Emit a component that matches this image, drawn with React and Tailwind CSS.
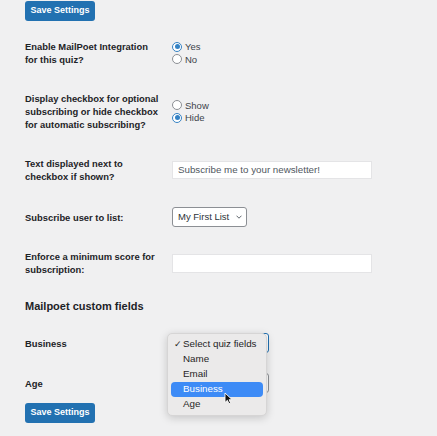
const font = { fontFamily: '"Liberation Sans", Arial, sans-serif' };

function Radio({ checked, label }) {
  return (
    <div className="flex items-center h-[12.5px]">
      <span
        className={
          "w-[10px] h-[10px] rounded-full border bg-white flex items-center justify-center shrink-0 " +
          (checked ? "border-[#3582c4]" : "border-[#8c8f94]")
        }
      >
        {checked && <span className="w-[5px] h-[5px] rounded-full bg-[#3582c4]" />}
      </span>
      <span className="ml-[3px] text-[9.5px] text-[#3c434a] leading-none">{label}</span>
    </div>
  );
}

function Row({ className = "", label, children }) {
  return (
    <div className={"flex items-center " + className}>
      <div className="w-[147px] shrink-0 text-[9.4px] leading-[13px] font-bold text-[#1d2327]">{label}</div>
      <div className="flex-1 relative">{children}</div>
    </div>
  );
}

function SaveButton({ className = "" }) {
  return (
    <button className={"w-[70px] h-[20px] rounded-[3px] bg-[#2271b1] text-white text-[9px] font-semibold flex items-center justify-center " + className}>
      Save Settings
    </button>
  );
}

function Chevron() {
  return (
    <svg width="6" height="4" viewBox="0 0 6 4" className="ml-auto">
      <polyline points="0.5,0.7 3,3.2 5.5,0.7" fill="none" stroke="#50575e" strokeWidth="0.9" />
    </svg>
  );
}

export default function App() {
  const options = ["Select quiz fields", "Name", "Email", "Business", "Age"];
  return (
    <div className="w-[437px] h-[436px] bg-[#f0f0f1] px-[25px] pt-[1px] overflow-hidden" style={font}>
      <SaveButton />

      <Row className="mt-[19px]" label={<>Enable MailPoet Integration<br />for this quiz?</>}>
        <Radio checked label="Yes" />
        <Radio label="No" />
      </Row>

      <Row className="mt-[26px]" label={<>Display checkbox for optional<br />subscribing or hide checkbox<br />for automatic subscribing?</>}>
        <Radio label="Show" />
        <Radio checked label="Hide" />
      </Row>

      <Row className="mt-[26px]" label={<>Text displayed next to<br />checkbox if shown?</>}>
        <div className="w-[200px] h-[18px] bg-white border border-[#e4e4e6] flex items-center px-[5px] text-[9.75px] text-[#50575e]">
          Subscribe me to your newsletter!
        </div>
      </Row>

      <Row className="mt-[24px]" label="Subscribe user to list:">
        <div className="w-[75px] h-[20px] bg-white border border-[#8c8f94] rounded-[3px] flex items-center pl-[5px] pr-[4px] text-[9.5px] text-[#2c3338]">
          My First List
          <Chevron />
        </div>
      </Row>

      <Row className="mt-[23px]" label={<>Enforce a minimum score for<br />subscription:</>}>
        <div className="w-[200px] h-[19px] bg-white border border-[#e4e4e6]" />
      </Row>

      <div className="mt-[23px] h-[14px] leading-[14px] text-[11px] font-bold text-[#1d2327]">Mailpoet custom fields</div>

      <Row className="mt-[20px] relative z-10" label="Business">
        <div className="w-[97px] h-[20px] bg-white border border-[#2271b1] rounded-[3px]" />
        <div className="absolute left-[-5px] top-0 w-[100px] h-[83px] bg-[#ebeaea] rounded-[5px] border border-[#d6d5d5] shadow-[0_2px_8px_rgba(0,0,0,0.18)] pt-[3px] px-[3px]">
          {options.map((o, i) => (
            <div
              key={o}
              className={
                "h-[15px] flex items-center rounded-[4px] text-[9.8px] " +
                (o === "Business" ? "bg-[#3d8bf6] text-white" : "text-[#1f1f1f]")
              }
            >
              <span className="w-[12px] pl-[3px] text-[9px]">{i === 0 ? "✓" : ""}</span>
              {o}
            </div>
          ))}
          <svg width="9" height="13" viewBox="0 0 9 13" className="absolute left-[56px] top-[58px]">
            <path d="M1 1 L1 10.5 L3.4 8.3 L5 11.8 L6.6 11.1 L5.1 7.7 L8.2 7.7 Z" fill="#111" stroke="#fff" strokeWidth="0.9" strokeLinejoin="round" />
          </svg>
        </div>
      </Row>

      <Row className="mt-[20px]" label="Age">
        <div className="w-[97px] h-[20px] bg-white border border-[#8c8f94] rounded-[3px]" />
      </Row>

      <SaveButton className="mt-[10px]" />
    </div>
  );
}
